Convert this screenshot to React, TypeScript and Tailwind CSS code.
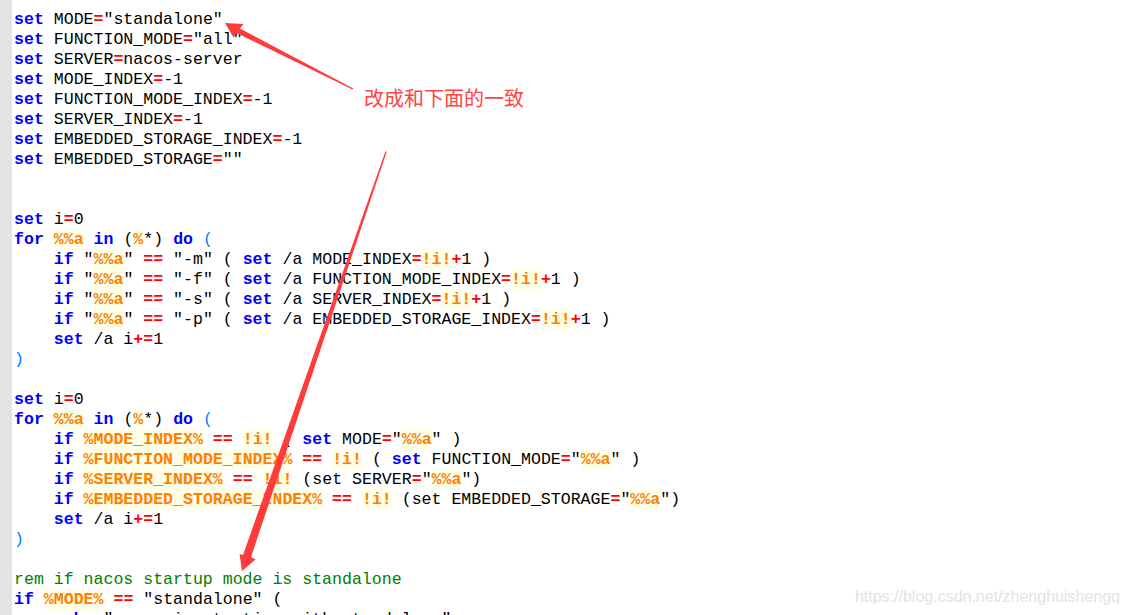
import React from "react";

type Tok = [string, string];

const K = (s: string): Tok => ["k", s];
const O = (s: string): Tok => ["o", s];
const V = (s: string): Tok => ["v", s];
const T = (s: string): Tok => ["t", s];
const C = (s: string): Tok => ["c", s];
const P = (s: string): Tok => ["p", s];

const lines: Tok[][] = [
  [K("set"), T(" MODE"), O("="), T('"standalone"')],
  [K("set"), T(" FUNCTION_MODE"), O("="), T('"all"')],
  [K("set"), T(" SERVER"), O("="), T("nacos-server")],
  [K("set"), T(" MODE_INDEX"), O("="), T("-1")],
  [K("set"), T(" FUNCTION_MODE_INDEX"), O("="), T("-1")],
  [K("set"), T(" SERVER_INDEX"), O("="), T("-1")],
  [K("set"), T(" EMBEDDED_STORAGE_INDEX"), O("="), T("-1")],
  [K("set"), T(" EMBEDDED_STORAGE"), O("="), T('""')],
  [],
  [],
  [K("set"), T(" i"), O("="), T("0")],
  [K("for"), T(" "), V("%%a"), T(" "), K("in"), T(" ("), V("%"), T("*) "), K("do"), T(" "), P("(")],
  [T("    "), K("if"), T(' "'), V("%%a"), T('" '), O("=="), T(' "-m" ( '), K("set"), T(" /a MODE_INDEX"), O("="), V("!i!"), O("+"), T("1 )")],
  [T("    "), K("if"), T(' "'), V("%%a"), T('" '), O("=="), T(' "-f" ( '), K("set"), T(" /a FUNCTION_MODE_INDEX"), O("="), V("!i!"), O("+"), T("1 )")],
  [T("    "), K("if"), T(' "'), V("%%a"), T('" '), O("=="), T(' "-s" ( '), K("set"), T(" /a SERVER_INDEX"), O("="), V("!i!"), O("+"), T("1 )")],
  [T("    "), K("if"), T(' "'), V("%%a"), T('" '), O("=="), T(' "-p" ( '), K("set"), T(" /a EMBEDDED_STORAGE_INDEX"), O("="), V("!i!"), O("+"), T("1 )")],
  [T("    "), K("set"), T(" /a i"), O("+="), T("1")],
  [P(")")],
  [],
  [K("set"), T(" i"), O("="), T("0")],
  [K("for"), T(" "), V("%%a"), T(" "), K("in"), T(" ("), V("%"), T("*) "), K("do"), T(" "), P("(")],
  [T("    "), K("if"), T(" "), V("%MODE_INDEX%"), T(" "), O("=="), T(" "), V("!i!"), T(" ( "), K("set"), T(" MODE"), O("="), T('"'), V("%%a"), T('" )')],
  [T("    "), K("if"), T(" "), V("%FUNCTION_MODE_INDEX%"), T(" "), O("=="), T(" "), V("!i!"), T(" ( "), K("set"), T(" FUNCTION_MODE"), O("="), T('"'), V("%%a"), T('" )')],
  [T("    "), K("if"), T(" "), V("%SERVER_INDEX%"), T(" "), O("=="), T(" "), V("!i!"), T(" (set SERVER"), O("="), T('"'), V("%%a"), T('")')],
  [T("    "), K("if"), T(" "), V("%EMBEDDED_STORAGE_INDEX%"), T(" "), O("=="), T(" "), V("!i!"), T(" (set EMBEDDED_STORAGE"), O("="), T('"'), V("%%a"), T('")')],
  [T("    "), K("set"), T(" /a i"), O("+="), T("1")],
  [P(")")],
  [],
  [C("rem if nacos startup mode is standalone")],
  [K("if"), T(" "), V("%MODE%"), T(" "), O("=="), T(' "standalone" (')],
  [T("    "), K("echo"), T(' "nacos is starting with standalone"')],
];

function Token({ t }: { t: Tok }) {
  const [type, text] = t;
  if (type === "k") return <span className="font-bold text-[#0000ff]">{text}</span>;
  if (type === "o") return <span className="font-bold text-[#ff0000]">{text}</span>;
  if (type === "v")
    return <span className="inline-block h-5 bg-[#fefde6] font-bold text-[#ff8000] align-top">{text}</span>;
  if (type === "c") return <span className="text-[#008000]">{text}</span>;
  if (type === "p") return <span className="text-[#0080ff]">{text}</span>;
  return <span className="text-[#000000]">{text}</span>;
}

export default function App() {
  return (
    <div className="relative h-[615px] w-[1129px] overflow-hidden bg-white">
      <div className="flex h-full">
        <div className="h-full w-[12px] shrink-0 bg-[#e4e4e4]" />
        <div
          className="flex-1 pl-[2px] pt-[10px] text-[16.57px] leading-[20px] whitespace-pre"
          style={{ fontFamily: '"Liberation Mono", "Courier New", monospace' }}
        >
          {lines.map((ln, i) => (
            <div key={i} className="h-5">
              {ln.map((t, j) => (
                <Token key={j} t={t} />
              ))}
            </div>
          ))}
        </div>
      </div>

      <svg className="pointer-events-none absolute left-0 top-0" width="1129" height="615" viewBox="0 0 1129 615">
        <polygon
          points="225,23 243.5,24 240,28.5 353.3,88.4 352.6,89.6 236.5,33 233.5,37.5"
          fill="#ff3b3b"
        />
        <polygon
          points="242,571 255.5,559.5 251,557 386.8,151.6 385.4,151.4 243,555 239.6,554"
          fill="#ff3b3b"
        />
      </svg>

      <div
        className="absolute left-[364px] top-[86px] text-[20px] leading-[24px] text-[#ff4444]"
        style={{ fontFamily: '"Noto Sans CJK SC", sans-serif' }}
      >
        改成和下面的一致
      </div>

      <div
        className="absolute right-[9px] top-[587px] text-[16px] leading-[20px] text-[#e3e3e3]"
        style={{ fontFamily: '"Liberation Sans", Arial, sans-serif' }}
      >
        https://blog.csdn.net/zhenghuishengq
      </div>
    </div>
  );
}
